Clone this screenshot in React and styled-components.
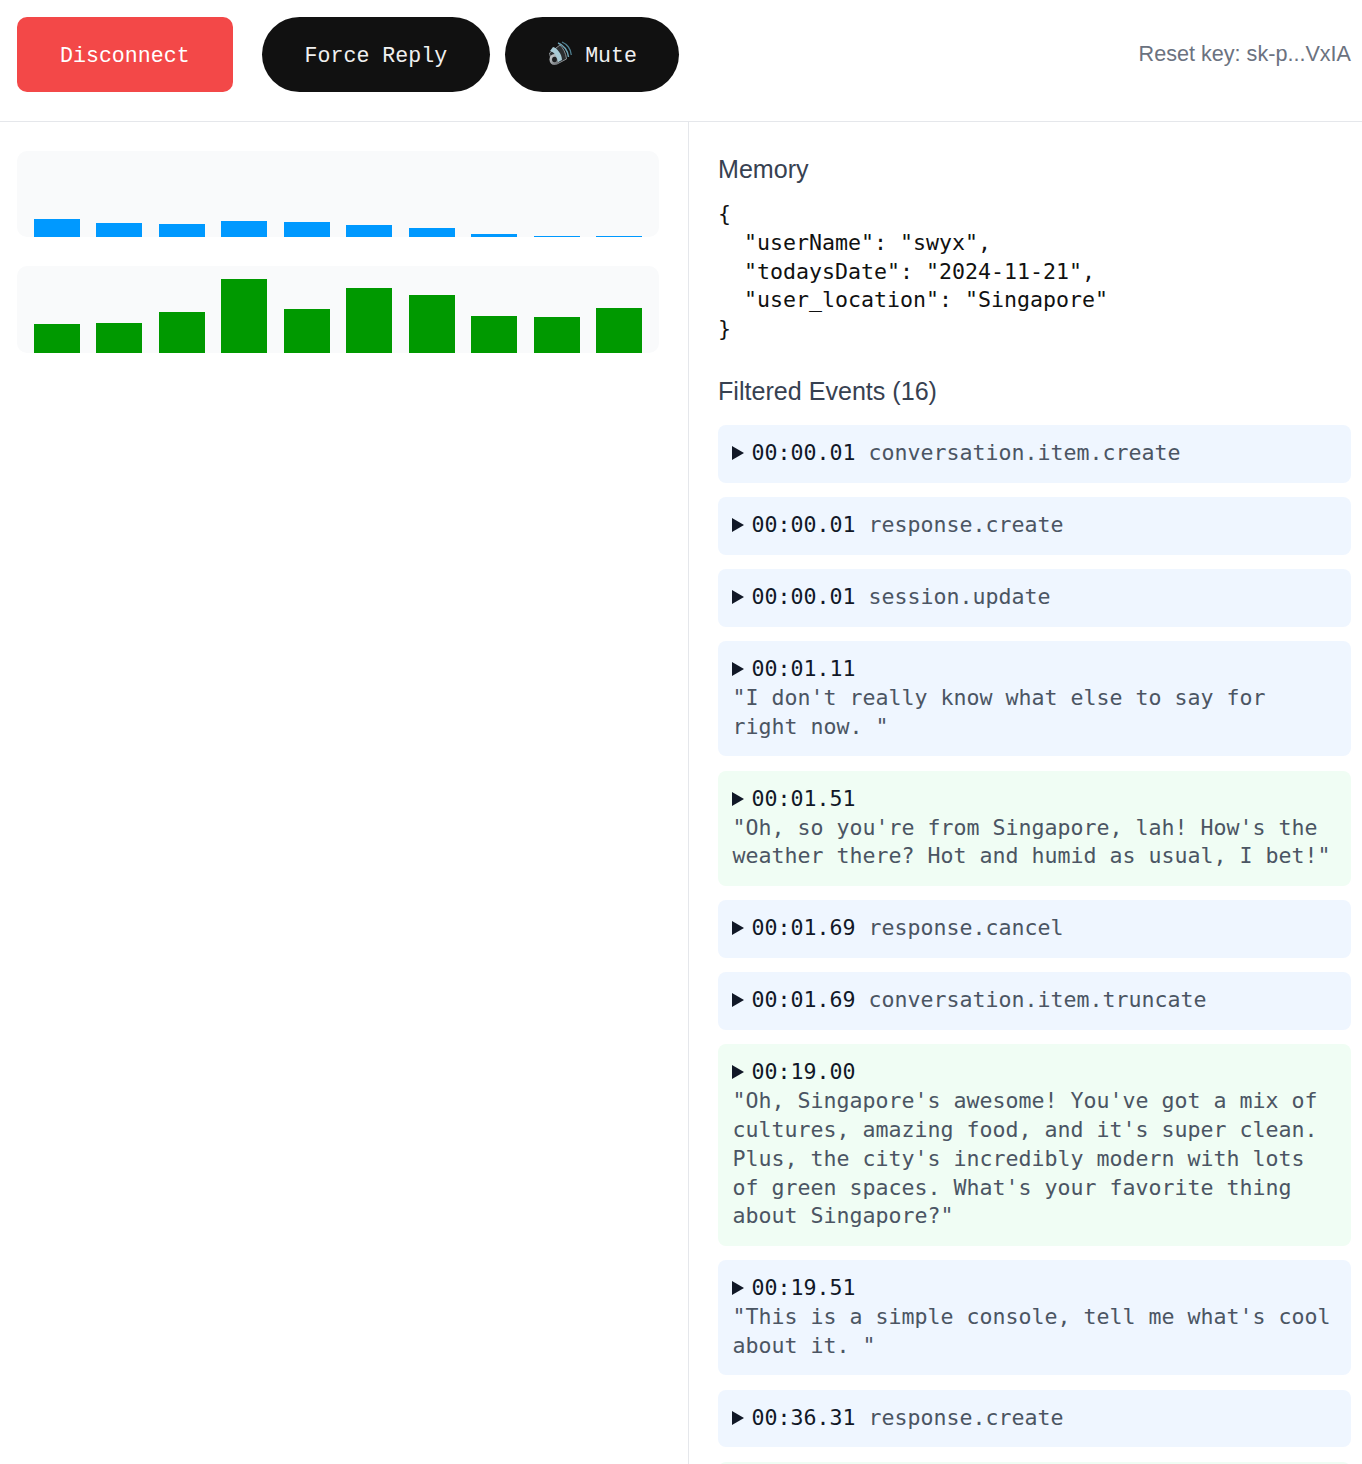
import React from "react";
import styled, { createGlobalStyle } from "styled-components";

const Global = createGlobalStyle`
  html, body { margin: 0; padding: 0; background: #fff; }
  body { height: 1464px; overflow: hidden; font-family: "Liberation Sans", Arial, sans-serif; }
  * { box-sizing: border-box; }
`;

const Page = styled.div`
  height: 1464px;
  overflow: hidden;
  display: flex;
  flex-direction: column;
`;
const Toolbar = styled.header`
  flex: none;
  height: 122px;
  padding: 0 11px 0 17px;
  border-bottom: 1px solid #e5e7eb;
  display: flex;
  align-items: flex-start;
`;
const Button = styled.button`
  height: 75px;
  margin-top: 17px;
  margin-right: ${(p) => p.$after}px;
  padding: 2px ${(p) => p.$end || 43}px 0 43px;
  border: 0;
  border-radius: ${(p) => (p.$pill ? "38px" : "10px")};
  background: ${(p) => (p.$pill ? "#111111" : "#f34848")};
  color: ${(p) => (p.$pill ? "#f0f0f0" : "#ffffff")};
  font: 400 21.6px "Liberation Mono", monospace;
  display: flex;
  align-items: center;
  white-space: pre;
`;
const ResetKey = styled.div`
  margin-left: auto;
  margin-top: 38px;
  color: #6b7280;
  font-size: 21.6px;
  line-height: 32px;
`;
const Speaker = styled.svg`
  width: 24px;
  height: 26px;
  margin: -3px 13px 0 0;
  flex: none;
`;
const Body = styled.main`
  flex: 1;
  min-height: 0;
  display: grid;
  grid-template-columns: 689px 1fr;
`;
const LeftPanel = styled.section`
  border-right: 1px solid #e5e7eb;
  padding: 29px 29px 0 17px;
  display: flex;
  flex-direction: column;
  gap: 29px;
`;
const Chart = styled.div`
  height: 86.4px;
  padding: 0 17px;
  background: #f9fafb;
  border-radius: 10px;
  overflow: hidden;
  display: flex;
  align-items: flex-end;
  justify-content: space-between;
`;
const Bar = styled.div`
  width: 46px;
  background: ${(p) => p.$color};
  filter: blur(0.4px);
`;
const RightPanel = styled.section`
  min-width: 0;
  padding: 29px 11px 0 29px;
`;
const Heading = styled.h2`
  margin: 0;
  height: 36px;
  color: #374151;
  font-size: 25.1px;
  line-height: 36px;
  font-weight: 400;
`;
const Memory = styled.pre`
  margin: 13px 0 29px;
  color: #111;
  font: 400 21.6px/28.8px "DejaVu Sans Mono", monospace;
`;
const Events = styled.div`
  margin-top: 16px;
  display: flex;
  flex-direction: column;
  gap: 14.4px;
`;
const Event = styled.details`
  flex: none;
  min-height: 57.6px;
  padding: 14.4px;
  border-radius: 8px;
  background: ${(p) => (p.$kind === "agent" ? "#f0fdf4" : "#eff6ff")};
  font: 400 21.6px/28.8px "DejaVu Sans Mono", monospace;
`;
const Summary = styled.summary`
  color: #4b5563;
  display: block;
`;
const Marker = styled.svg`
  width: 12px;
  height: 14px;
  margin-right: 7px;
  vertical-align: 0;
`;
const Time = styled.span`
  color: #111827;
  margin-right: 13px;
`;
const TranscriptTime = styled(Time)`
  margin-right: 0;
`;
const Text = styled.div`
  color: #4b5563;
`;

const blue = [18, 14.5, 13, 16, 15, 12.7, 9.7, 3, 1.3, 1];
const green = [28.5, 29.5, 41, 74, 44, 65, 57.5, 36.5, 36, 45];

const events = [
  { t: "00:00.01", n: "conversation.item.create" },
  { t: "00:00.01", n: "response.create" },
  { t: "00:00.01", n: "session.update" },
  { t: "00:01.11", q: `"I don't really know what else to say for right now. "` },
  { t: "00:01.51", k: "agent", q: `"Oh, so you're from Singapore, lah! How's the weather there? Hot and humid as usual, I bet!"` },
  { t: "00:01.69", n: "response.cancel" },
  { t: "00:01.69", n: "conversation.item.truncate" },
  { t: "00:19.00", k: "agent", q: `"Oh, Singapore's awesome! You've got a mix of cultures, amazing food, and it's super clean. Plus, the city's incredibly modern with lots of green spaces. What's your favorite thing about Singapore?"` },
  { t: "00:19.51", q: `"This is a simple console, tell me what's cool about it. "` },
  { t: "00:36.31", n: "response.create" },
];

const memory = `{
  "userName": "swyx",
  "todaysDate": "2024-11-21",
  "user_location": "Singapore"
}`;

const SpeakerIcon = () => (
  <Speaker viewBox="0 0 24 26">
    <defs>
      <linearGradient id="cone" x1="0" y1="0" x2="1" y2="1">
        <stop offset="0" stopColor="#d8dde0" />
        <stop offset="1" stopColor="#5c6064" />
      </linearGradient>
    </defs>
    <path d="M12 4 C15 7 18 12 18.5 18 L9 23 C5 21 2 17 1.5 12 Z" fill="#2b2e30" stroke="#8a8f93" strokeWidth="1" />
    <ellipse cx="6.5" cy="18.5" rx="5" ry="5.5" fill="url(#cone)" />
    <ellipse cx="6.5" cy="18.5" rx="2.4" ry="2.8" fill="#1d1f21" />
    <path d="M5 6 C9 7 14 13 14 19 L10 21 C9 15 6 11 2 10 Z" fill="#a9cbd6" />
    <path d="M10 2 C16 4 20 10 20.5 16" fill="none" stroke="#6fa3b5" strokeWidth="1.5" />
    <path d="M14 1 C19 3 23 8 23.3 14" fill="none" stroke="#4f7f90" strokeWidth="1.3" />
  </Speaker>
);

const Caret = () => (
  <Marker viewBox="0 0 12 14">
    <path d="M0 0 L12 7 L0 14 Z" fill="#111827" />
  </Marker>
);

export default function App() {
  return (
    <Page>
      <Global />
      <Toolbar>
        <Button $after={29}>Disconnect</Button>
        <Button $pill $after={15}>Force Reply</Button>
        <Button $pill $after={0} $end={42}><SpeakerIcon />Mute</Button>
        <ResetKey>Reset key: sk-p...VxIA</ResetKey>
      </Toolbar>
      <Body>
        <LeftPanel>
          <Chart>{blue.map((h, i) => <Bar key={i} $color="#0099ff" style={{ height: h }} />)}</Chart>
          <Chart>{green.map((h, i) => <Bar key={i} $color="#009900" style={{ height: h }} />)}</Chart>
        </LeftPanel>
        <RightPanel>
          <Heading>Memory</Heading>
          <Memory>{memory}</Memory>
          <Heading>Filtered Events (16)</Heading>
          <Events>
            {events.map((e, i) => (
              <Event key={i} $kind={e.k}>
                <Summary>
                  <Caret />
                  {e.q ? (
                    <>
                      <TranscriptTime>{e.t}</TranscriptTime>
                      <Text>{e.q}</Text>
                    </>
                  ) : (
                    <>
                      <Time>{e.t}</Time>
                      {e.n}
                    </>
                  )}
                </Summary>
              </Event>
            ))}
            <Event $kind="agent" />
          </Events>
        </RightPanel>
      </Body>
    </Page>
  );
}
